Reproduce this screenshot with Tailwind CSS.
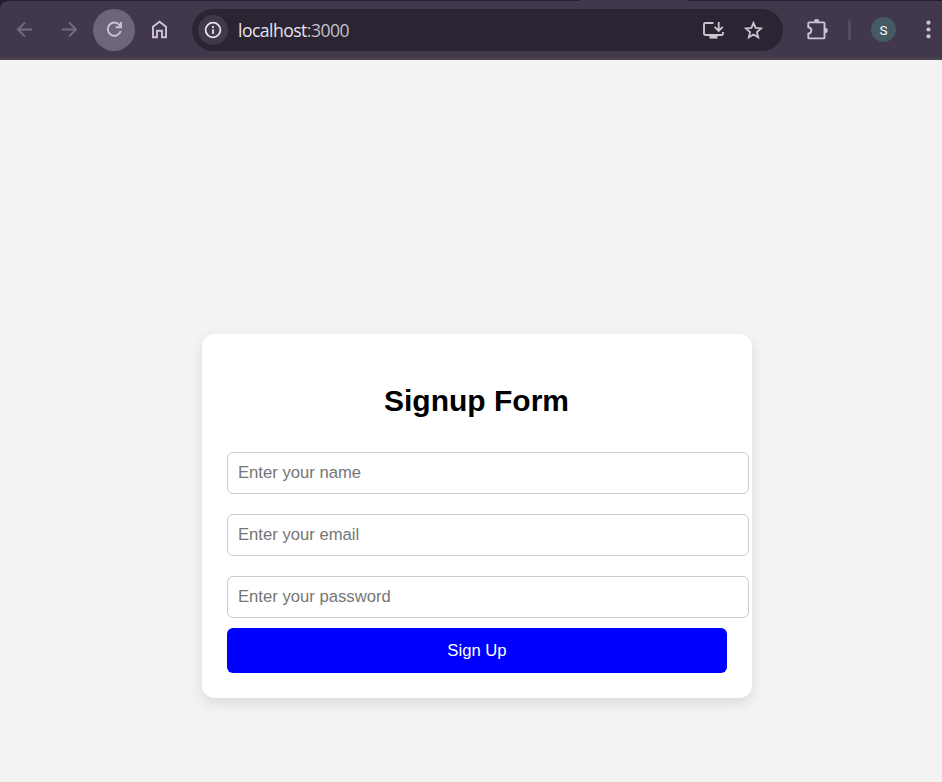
<!DOCTYPE html>
<html lang="en">
<head>
<meta charset="utf-8">
<title>Signup Form</title>
<script src="https://cdn.jsdelivr.net/npm/@tailwindcss/browser@4"></script>
</head>
<body class="flex h-[782px] w-[942px] flex-col overflow-hidden bg-[#f3f3f3] font-['Liberation_Sans',Arial,sans-serif]">
<header class="relative h-[60px] shrink-0 bg-[#251c30]">
  <div class="flex h-full items-start pt-px">
    <div class="flex h-[59px] w-full items-center rounded-tl-[8px] border-b-2 border-[#4a4551] bg-[#41384b] pb-px">
      <button class="ml-[13px] h-6 w-6" aria-label="Back"><svg width="24" height="24" fill="none" stroke="#756b80" stroke-width="1.9"><path d="M19 12.5H5M12 5.5L5 12.5L12 19.5"/></svg></button>
      <button class="ml-[20px] h-6 w-6" aria-label="Forward"><svg width="24" height="24" fill="none" stroke="#756b80" stroke-width="1.9"><path d="M5 12.5H19M12 5.5L19 12.5L12 19.5"/></svg></button>
      <button class="mt-px ml-[12px] flex h-[42px] w-[42px] items-center justify-center rounded-full bg-[#6e6678]" aria-label="Reload"><svg width="24" height="24" fill="none" stroke="#cfc2de" stroke-width="1.9"><path d="M18.2 8A6.6 6.6 0 1 0 18.7 13"/><path d="M19 4V9.2H13.6"/></svg></button>
      <button class="ml-[12px] h-6 w-6" aria-label="Home"><svg width="24" height="24" fill="none" stroke="#cfc2de" stroke-width="1.9"><path d="M6 20.2V9.8L12.5 4.8L19 9.8V20.2H15V13.8H10V20.2Z"/></svg></button>
      <div class="mt-px ml-[21px] flex h-[42px] w-[591px] items-center rounded-full bg-[#2a2433] pl-[6px]">
        <div class="flex h-[30px] w-[30px] items-center justify-center rounded-full bg-[#41384b]"><svg width="20" height="20" fill="none" stroke="#e6e0e9" stroke-width="1.8"><circle cx="10" cy="10" r="7.4"/><path d="M10 9.2V13.9M10 6V7.9"/></svg></div>
        <div class="ml-[10px] w-[111px] pt-px font-['Open_Sans','Noto_Sans',sans-serif] text-[17.6px] leading-[24px] tracking-[-0.54px] whitespace-nowrap text-[#e8e2ee]">localhost<span class="text-[#c5bfcb]">:3000</span></div>
        <svg class="ml-[352px]" width="24" height="24" fill="none" stroke="#c9c4ce" stroke-width="1.9"><path d="M12.5 5H4.2Q3 5 3 6.2V15.8Q3 17 4.2 17H20.8Q22 17 22 15.8V14M17.7 4V12.5M13.6 8.8L17.7 12.9L21.8 8.8"/><path d="M8.5 17H16.5V20.6H8.5Z" fill="#c9c4ce" stroke="none"/></svg>
        <svg class="ml-[16px]" width="24" height="24" fill="none" stroke="#c9c4ce" stroke-width="1.8"><path d="M12.5 4.8L14.6 9.9L20.1 10.4L15.9 14L17.2 19.3L12.5 16.5L7.8 19.3L9.1 14L4.9 10.4L10.4 9.9Z"/></svg>
      </div>
      <button class="ml-[22px] h-6 w-6" aria-label="Extensions"><svg width="24" height="24" fill="none" stroke="#cfc2de" stroke-width="1.9"><path d="M4.2 5.4H18.6Q19.5 5.4 19.5 6.3V20.5Q19.5 21.4 18.6 21.4H4.2Q3.3 21.4 3.3 20.5V16.7C7.4 15.8 7.4 11 3.3 10.2V6.3Q3.3 5.4 4.2 5.4Z"/><path d="M8.9 4.8a2.7 2.7 0 0 1 5.4 0ZM20 10.7a2.7 2.7 0 0 1 0 5.4Z" fill="#cfc2de" stroke="none"/></svg></button>
      <div class="mt-px ml-[19px] h-5 w-[3px] rounded-full bg-[#564c62]"></div>
      <div class="mt-px ml-[20px] flex h-[25px] w-[25px] items-center justify-center rounded-full bg-[#455a64] pt-px font-[Roboto] text-[13.5px] text-white">S</div>
      <button class="ml-[20px] h-6 w-6" aria-label="Menu"><svg width="24" height="24" fill="#cfc2de"><circle cx="12.5" cy="5.7" r="2.1"/><circle cx="12.5" cy="12.5" r="2.1"/><circle cx="12.5" cy="19.3" r="2.1"/></svg></button>
    </div>
  </div>
  <div class="absolute top-0 left-[579px] h-px w-[109px] bg-[#41384b]"></div>
</header>
<main class="flex flex-1 justify-center pt-[274px] pl-[12px]">
  <form class="h-[364px] w-[550px] rounded-[12.5px] bg-white px-[25px] pt-[49px] shadow-[0_5px_12.5px_rgba(0,0,0,0.1)]">
    <h2 class="mb-[34px] pr-px text-center text-[30px] leading-[35px] font-bold text-black">Signup Form</h2>
    <div class="flex w-[522px] flex-col gap-5">
      <input type="text" placeholder="Enter your name" class="h-[42px] rounded-[6px] border border-[#cccccc] px-[10px] text-[16.667px] placeholder:text-[#757575]">
      <input type="email" placeholder="Enter your email" class="h-[42px] rounded-[6px] border border-[#cccccc] px-[10px] text-[16.667px] placeholder:text-[#757575]">
      <input type="password" placeholder="Enter your password" class="h-[42px] rounded-[6px] border border-[#cccccc] px-[10px] text-[16.667px] placeholder:text-[#757575]">
    </div>
    <button type="button" class="mt-[10px] h-[45px] w-[500px] rounded-[6px] bg-[#0000ff] text-[16.667px] text-white">Sign Up</button>
  </form>
</main>
</body>
</html>
